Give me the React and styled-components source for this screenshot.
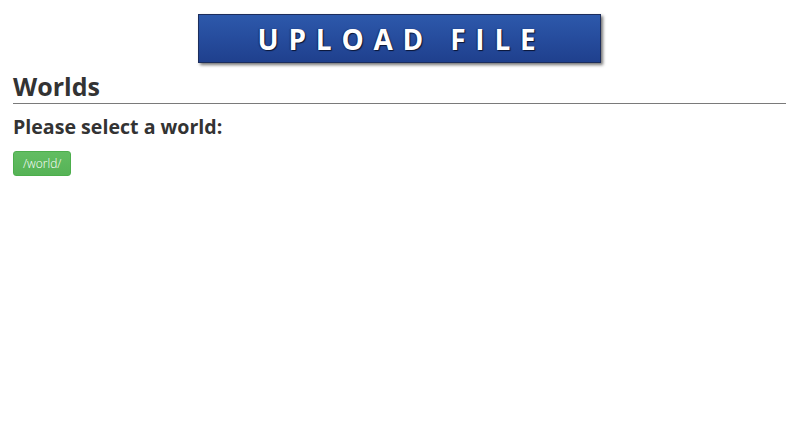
import React from "react";
import styled, { createGlobalStyle } from "styled-components";

const GlobalStyle = createGlobalStyle`
  html, body {
    margin: 0;
    padding: 0;
    background: #ffffff;
  }
  body {
    font-family: "Open Sans", "Liberation Sans", sans-serif;
    color: #333333;
  }
`;

const Page = styled.div`
  padding: 14px 14px 0 13px;
`;

const Banner = styled.div`
  display: flex;
  justify-content: center;
`;

const UploadButton = styled.button`
  width: 403px;
  height: 49px;
  box-sizing: border-box;
  border: 1px solid #1c2d5c;
  background: linear-gradient(to bottom, #2d59ab 0%, #264c9d 50%, #1f408d 100%);
  box-shadow: 2px 2px 3px rgba(0, 0, 0, 0.55);
  color: #ffffff;
  font-family: "Open Sans", "Liberation Sans", sans-serif;
  font-weight: 700;
  font-size: 28px;
  letter-spacing: 9.8px;
  padding: 0 0 0 4px;
  text-shadow: 1px 1px 1px #0b1533, -1px 0 1px rgba(10, 20, 50, 0.6);
  cursor: pointer;
`;

const SectionTitle = styled.h2`
  margin: 8px 0 0 0;
  font-size: 25px;
  font-weight: 700;
  line-height: 30px;
  padding-bottom: 2px;
  border-bottom: 1px solid #7a7a7a;
  color: #333333;
`;

const Prompt = styled.h3`
  margin: 10px 0 0 0;
  font-size: 19.6px;
  font-weight: 700;
  line-height: 26px;
  color: #333333;
`;

const WorldList = styled.div`
  display: flex;
  gap: 6px;
  margin-top: 11px;
`;

const WorldButton = styled.button`
  height: 25px;
  box-sizing: border-box;
  padding: 0 9px;
  border: 1px solid #4cae4c;
  border-radius: 3px;
  background: linear-gradient(to bottom, #62bd62, #56b356);
  color: #ffffff;
  font-family: "Open Sans", "Liberation Sans", sans-serif;
  font-weight: 300;
  font-size: 12px;
  cursor: pointer;
`;

const worlds = ["/world/"];

export default function App() {
  return (
    <>
      <GlobalStyle />
      <Page>
        <Banner>
          <UploadButton>UPLOAD FILE</UploadButton>
        </Banner>
        <SectionTitle>Worlds</SectionTitle>
        <Prompt>Please select a world:</Prompt>
        <WorldList>
          {worlds.map((w) => (
            <WorldButton key={w}>{w}</WorldButton>
          ))}
        </WorldList>
      </Page>
    </>
  );
}
